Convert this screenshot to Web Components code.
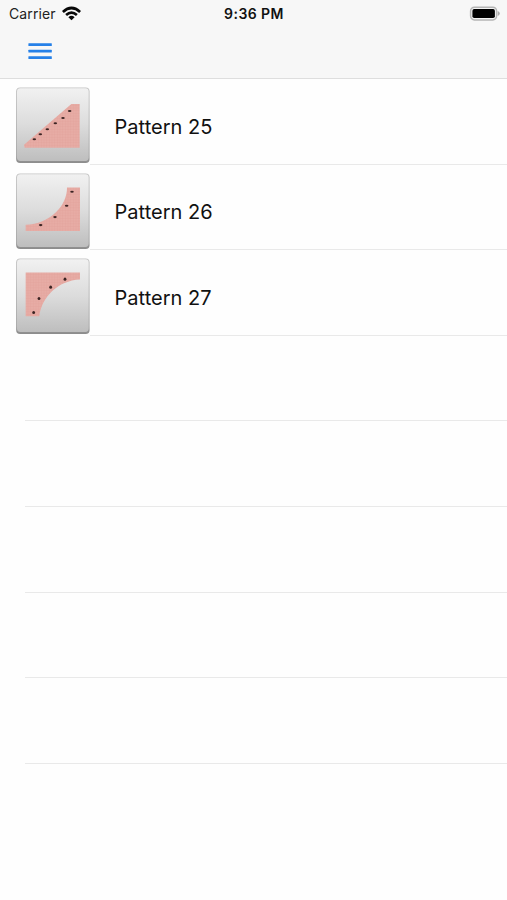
<!DOCTYPE html>
<html lang="en">
<head>
<meta charset="utf-8">
<title>Patterns</title>
<style>
html,body{margin:0;background:#fefefe;overflow:hidden}
body{font-family:Inter,"Liberation Sans",sans-serif;color:#111}
</style>
</head>
<body>
<pattern-app></pattern-app>
<script>
const define = (name, html, setup) => customElements.define(name, class extends HTMLElement {
  connectedCallback() {
    if (this.shadowRoot) return;
    const t = document.createElement('template');
    t.innerHTML = html;
    this.attachShadow({mode: 'open'}).append(t.content.cloneNode(true));
    if (setup) setup(this);
  }
});

define('status-bar', `<style>
:host{display:grid;grid-template-columns:1fr auto 1fr;align-items:center;height:27px;padding:0 7px 0 9px;box-sizing:border-box;font-size:14px}
.left{display:flex;align-items:center;gap:6px;letter-spacing:.1px;color:#222}
.time{font-weight:600;letter-spacing:.44px;margin-left:-1px}
.right{justify-self:end;display:flex}
svg{display:block}
</style>
<div class="left"><span>Carrier</span><svg width="19" height="15" viewBox="0 0 19 15"><g fill="none" stroke="#080808" stroke-width="2.7"><path d="M.9 5.9Q9.5-1.9 18.1 5.9"/><path d="M4.1 9Q9.5 4.3 14.9 9"/></g><path d="M6.4 11.2Q9.5 8.3 12.6 11.2L9.5 14.3Z" fill="#080808"/></svg></div>
<span class="time">9:36 PM</span>
<div class="right"><svg width="31" height="16" viewBox="0 0 31 16"><rect x="1.6" y="1.2" width="26" height="12.7" rx="3.8" fill="#f4f4f4" stroke="#b5b5b5" stroke-width="1.5"/><rect x="3.4" y="3.1" width="22.5" height="9" rx="1.8" fill="#000"/><path d="M28.7 5.1Q30.8 6 30.8 7.6T28.7 10.1Z" fill="#aaa"/></svg></div>`);

define('nav-bar', `<style>
:host{display:flex;align-items:center;height:51px;padding:0 0 2.4px 28px;box-sizing:border-box}
svg{display:block}
</style><svg width="24" height="18" viewBox="0 0 24 18" fill="#2580e8"><rect x=".4" y="1.2" width="23.4" height="2.7" rx=".5"/><rect x=".4" y="7.7" width="23.4" height="2.7" rx=".5"/><rect x=".4" y="14.2" width="23.4" height="2.7" rx=".5"/></svg>`);

const art = {
  slope: {y: 1, shape: 'M50 203L48 194L190 72H215V203Z', marks: [[79,178],[97,163],[118,148],[142,130],[165,114],[185,93]], r: [5.3,3]},
  concave: {y: 1.4, shape: 'M53 194V175C125 173 178 118 177 63H216V194Z', marks: [[98,176],[141,152],[176,118],[192,76]], r: [5.3,3.3]},
  arch: {y: 1.8, shape: 'M53 62H216V83C150 86 101 136 94 193H53Z', marks: [[77,182],[93,140],[128,106],[171,82]], r: [4.3,4.6]}
};

define('pattern-tile', `<style>:host{display:block;width:82px;height:85.6px;flex:none}svg{display:block;overflow:visible}</style><div id="art"></div>`, el => {
  const a = art[el.getAttribute('kind')];
  el.shadowRoot.getElementById('art').innerHTML = `<svg width="82" height="85.6" viewBox="0 0 82 85.6"><defs>
<linearGradient id="g" x1="0" y1="0" x2="0" y2="1"><stop offset="0" stop-color="#f1f1f1"/><stop offset=".5" stop-color="#dcdcdc"/><stop offset="1" stop-color="#bebebe"/></linearGradient>
<linearGradient id="e" x1="0" y1="0" x2="0" y2="1"><stop offset="0" stop-color="#c4c4c4"/><stop offset=".9" stop-color="#a2a2a2"/><stop offset="1" stop-color="#8c8c8c"/></linearGradient>
<pattern id="p" width="8" height="8" patternUnits="userSpaceOnUse"><rect width="8" height="8" fill="#e7aca5"/><path d="M0 4H8M4 0V8" stroke="#e2a299" stroke-width="1"/></pattern></defs>
<rect x="8.1" y="8.4" width="73.5" height="75.5" rx="4" fill="url(#e)"/>
<rect x="9" y="9.3" width="71.7" height="72.6" rx="3.4" fill="url(#g)"/>
<g transform="translate(0 ${a.y}) scale(.33333)"><path d="${a.shape}" fill="url(#p)"/>${a.marks.map(([x,y]) => `<ellipse cx="${x}" cy="${y}" rx="${a.r[0]}" ry="${a.r[1]}" fill="#3b2423"/>`).join('')}</g></svg>`;
});

define('pattern-row', `<style>
:host{display:flex;height:85.6px;box-sizing:border-box;padding-left:8px}
:host([empty]){padding-left:25px}
.body{flex:1;display:flex;align-items:center;padding:11px 0 0 24.6px;box-sizing:border-box;border-bottom:1px solid #e9e9e9;font-size:20px;letter-spacing:0}
</style><slot name="tile"></slot><div class="body"><slot></slot></div>`);

define('pattern-app', `<style>
:host{display:block;height:900px;overflow:hidden;background:#fefefe}
header{height:79px;background:#f7f7f7;box-sizing:border-box;border-bottom:1px solid #dedede}
</style>
<header><status-bar></status-bar><nav-bar></nav-bar></header>
<main>
<pattern-row><pattern-tile slot="tile" kind="slope"></pattern-tile>Pattern 25</pattern-row>
<pattern-row><pattern-tile slot="tile" kind="concave"></pattern-tile>Pattern 26</pattern-row>
<pattern-row><pattern-tile slot="tile" kind="arch"></pattern-tile>Pattern 27</pattern-row>
<pattern-row empty></pattern-row><pattern-row empty></pattern-row><pattern-row empty></pattern-row><pattern-row empty></pattern-row><pattern-row empty></pattern-row>
</main>`);
</script>
</body>
</html>
